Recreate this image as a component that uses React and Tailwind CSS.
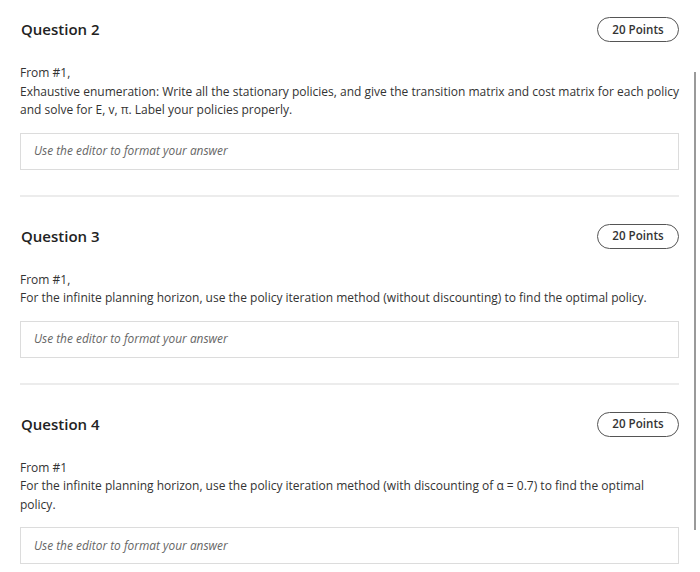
import React from "react";

const questions = [
  {
    title: "Question 2",
    lines: [
      "From #1,",
      "Exhaustive enumeration: Write all the stationary policies, and give the transition matrix and cost matrix for each policy and solve for E, v, π. Label your policies properly.",
    ],
  },
  {
    title: "Question 3",
    lines: [
      "From #1,",
      "For the infinite planning horizon, use the policy iteration method (without discounting) to find the optimal policy.",
    ],
  },
  {
    title: "Question 4",
    lines: [
      "From #1",
      "For the infinite planning horizon, use the policy iteration method (with discounting of α = 0.7) to find the optimal policy.",
    ],
  },
];

function Question({ q, last }) {
  return (
    <div className="flex flex-col">
      <div className="flex items-center justify-between h-[25px]">
        <h2 className="pl-px text-[15px] font-semibold text-[#222]">{q.title}</h2>
        <span className="flex items-center justify-center h-[25px] w-[82px] rounded-full border border-[#555] text-[11.6px] font-semibold text-[#333]">
          20 Points
        </span>
      </div>
      <div className="mt-[22px] text-[12px] leading-[18.5px] text-[#333]">
        {q.lines.map((l, i) => (
          <div key={i}>{l}</div>
        ))}
      </div>
      <div className="mt-[13px] h-[37px] border border-[#dcdcdc] flex items-center px-[13px]">
        <span className="italic text-[11.9px] text-[#666]">Use the editor to format your answer</span>
      </div>
      {!last && <div className="mt-[25px] mb-[27px] h-[2px] bg-[#ececec]" />}
    </div>
  );
}

export default function App() {
  return (
    <div
      className="relative w-[700px] h-[572px] bg-white overflow-hidden"
      style={{ fontFamily: '"Open Sans", "Liberation Sans", sans-serif' }}
    >
      <div className="pl-[20px] pr-[21px] pt-[17px]">
        {questions.map((q, i) => (
          <Question key={i} q={q} last={i === questions.length - 1} />
        ))}
      </div>
      <div className="absolute left-[694px] top-[72px] w-[2px] h-[458px] bg-[#9a9a9a]" />
    </div>
  );
}
